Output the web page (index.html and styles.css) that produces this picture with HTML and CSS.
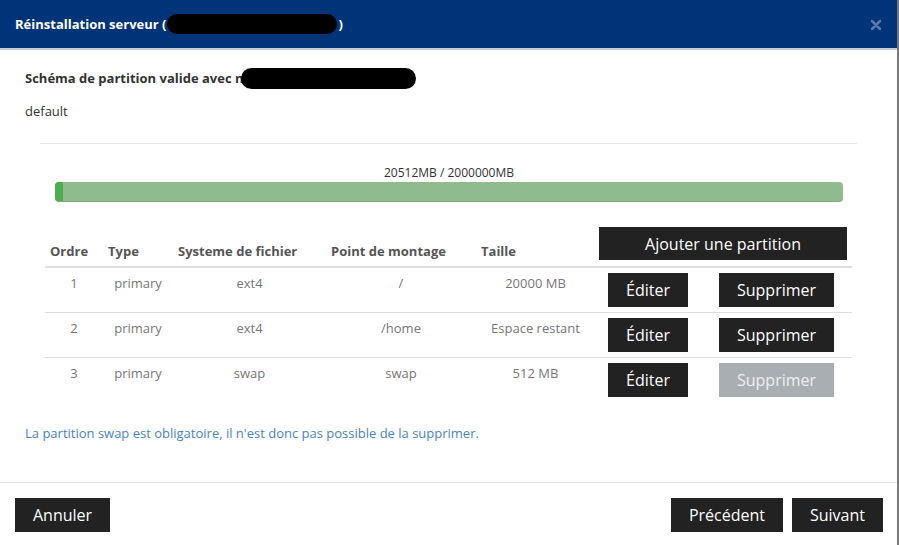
FILE: index.html
```html
<!DOCTYPE html>
<html lang="fr">
<head>
    <meta charset="UTF-8">
    <title>Réinstallation serveur</title>
    <link rel="stylesheet" href="styles.css">
</head>
<body>
    <div class="modal">
        <div class="modal-header">
            <h3 class="modal-title">Réinstallation serveur (<span class="redact redact-title"></span>)</h3>
            <span class="close">
                <svg width="10" height="10" viewBox="0 0 10 10"><path d="M1 1L9 9M9 1L1 9" stroke="#5b78ab" stroke-width="2.6" stroke-linecap="round"/></svg>
            </span>
        </div>
        <div class="modal-body">
            <h4 class="scheme-title">Schéma de partition valide avec n<span class="redact redact-os"></span></h4>
            <p class="scheme-name">default</p>
            <hr class="sep">
            <div class="usage">
                <div class="usage-label">20512MB / 2000000MB</div>
                <div class="progress"><div class="progress-fill" style="width: 8px"></div></div>
            </div>
            <table class="partitions">
                <colgroup>
                    <col style="width: 58px">
                    <col style="width: 70px">
                    <col style="width: 153px">
                    <col style="width: 150px">
                    <col style="width: 119px">
                    <col style="width: 105px">
                    <col style="width: 152px">
                </colgroup>
                <thead>
                    <tr>
                        <th>Ordre</th>
                        <th>Type</th>
                        <th>Systeme de fichier</th>
                        <th>Point de montage</th>
                        <th>Taille</th>
                        <th colspan="2" class="th-action"><button class="btn btn-block">Ajouter une partition</button></th>
                    </tr>
                </thead>
                <tbody>
                    <tr>
                        <td>1</td>
                        <td>primary</td>
                        <td>ext4</td>
                        <td>/</td>
                        <td>20000 MB</td>
                        <td class="td-action"><button class="btn">Éditer</button></td>
                        <td class="td-action"><button class="btn">Supprimer</button></td>
                    </tr>
                    <tr>
                        <td>2</td>
                        <td>primary</td>
                        <td>ext4</td>
                        <td>/home</td>
                        <td>Espace restant</td>
                        <td class="td-action"><button class="btn">Éditer</button></td>
                        <td class="td-action"><button class="btn">Supprimer</button></td>
                    </tr>
                    <tr>
                        <td>3</td>
                        <td>primary</td>
                        <td>swap</td>
                        <td>swap</td>
                        <td>512 MB</td>
                        <td class="td-action"><button class="btn">Éditer</button></td>
                        <td class="td-action"><button class="btn" disabled>Supprimer</button></td>
                    </tr>
                </tbody>
            </table>
            <p class="swap-note">La partition swap est obligatoire, il n'est donc pas possible de la supprimer.</p>
        </div>
        <div class="modal-footer">
            <button class="btn">Annuler</button>
            <div class="footer-right">
                <button class="btn">Précédent</button>
                <button class="btn">Suivant</button>
            </div>
        </div>
    </div>
</body>
</html>
```

FILE: styles.css
```css
html, body{
    margin: 0;
    padding: 0;
    background-color: #fff;
}

body{
    font-family: "Open Sans", "Liberation Sans", sans-serif;
    font-size: 13px;
    color: #333;
}

.modal{
    width: 897px;
    height: 545px;
    border-right: 2px solid #7a7a7a;
    background-color: #fff;
}

.modal-header{
    display: flex;
    align-items: center;
    justify-content: space-between;
    height: 48px;
    padding: 0 16px 0 15px;
    background-color: #003478;
    border-bottom: 2px solid #c9ccd2;
}

.modal-title{
    margin: 0;
    font-size: 13px;
    font-weight: 700;
    color: #fff;
    line-height: 20px;
}

.redact{
    display: inline-block;
    background-color: #000;
    border-radius: 11px;
    vertical-align: middle;
}

.redact-title{
    width: 170px;
    height: 20px;
    margin: -2px 1px 0 1px;
}

.redact-os{
    width: 175px;
    height: 21px;
    margin: -2px 0 0 -3px;
}

.close{
    display: flex;
    margin-top: 2px;
}

.modal-body{
    padding: 18px 25px 0;
    height: 414px;
}

.scheme-title{
    margin: 0;
    font-size: 13px;
    font-weight: 700;
    line-height: 20px;
}

.scheme-name{
    margin: 12px 0 0;
    line-height: 20px;
}

.sep{
    margin: 22px 15px 0;
    border: 0;
    border-top: 1px solid #e8e8e8;
}

.usage{
    margin: 20px 29px 0 30px;
}

.usage-label{
    font-size: 12px;
    line-height: 18px;
    text-align: center;
}

.progress{
    height: 20px;
    border-radius: 4px;
    background-color: #8fbb8f;
    border-bottom: 1px solid #7fa97f;
    box-sizing: border-box;
    overflow: hidden;
}

.progress-fill{
    height: 100%;
    background-color: #4cae4c;
}

.partitions{
    margin: 20px 20px 0;
    width: 807px;
    table-layout: fixed;
    border-collapse: collapse;
}

.partitions th{
    padding: 5px 5px 6px;
    font-weight: 700;
    color: #555;
    text-align: left;
    vertical-align: bottom;
    line-height: 18px;
    border-bottom: 2px solid #ddd;
    white-space: nowrap;
}

.partitions th.th-action{
    padding: 5px 5px 6px 4px;
}

.partitions td{
    padding: 6px 4px;
    color: #777;
    text-align: center;
    vertical-align: top;
    line-height: 18px;
    white-space: nowrap;
}

.partitions tbody tr + tr td{
    border-top: 1px solid #ddd;
}

.partitions td.td-action{
    padding: 5px 0 5px 1px;
}

.btn{
    height: 34px;
    padding: 0 18px;
    border: 0;
    border-radius: 0;
    font-family: "Open Sans", "Liberation Sans", sans-serif;
    font-size: 16px;
    color: #fff;
    background-color: #222;
    cursor: pointer;
}

.btn-block{
    display: block;
    width: 100%;
    height: 33px;
}

.btn:disabled{
    color: #eceff1;
    background-color: #a9aeb2;
    cursor: default;
}

.swap-note{
    margin: 22px 0 0;
    line-height: 18px;
    color: #4a84c2;
}

.modal-footer{
    display: flex;
    justify-content: space-between;
    padding: 15px 14px 0 15px;
    border-top: 1px solid #e5e5e5;
}

.footer-right{
    display: flex;
    gap: 9px;
}
```
